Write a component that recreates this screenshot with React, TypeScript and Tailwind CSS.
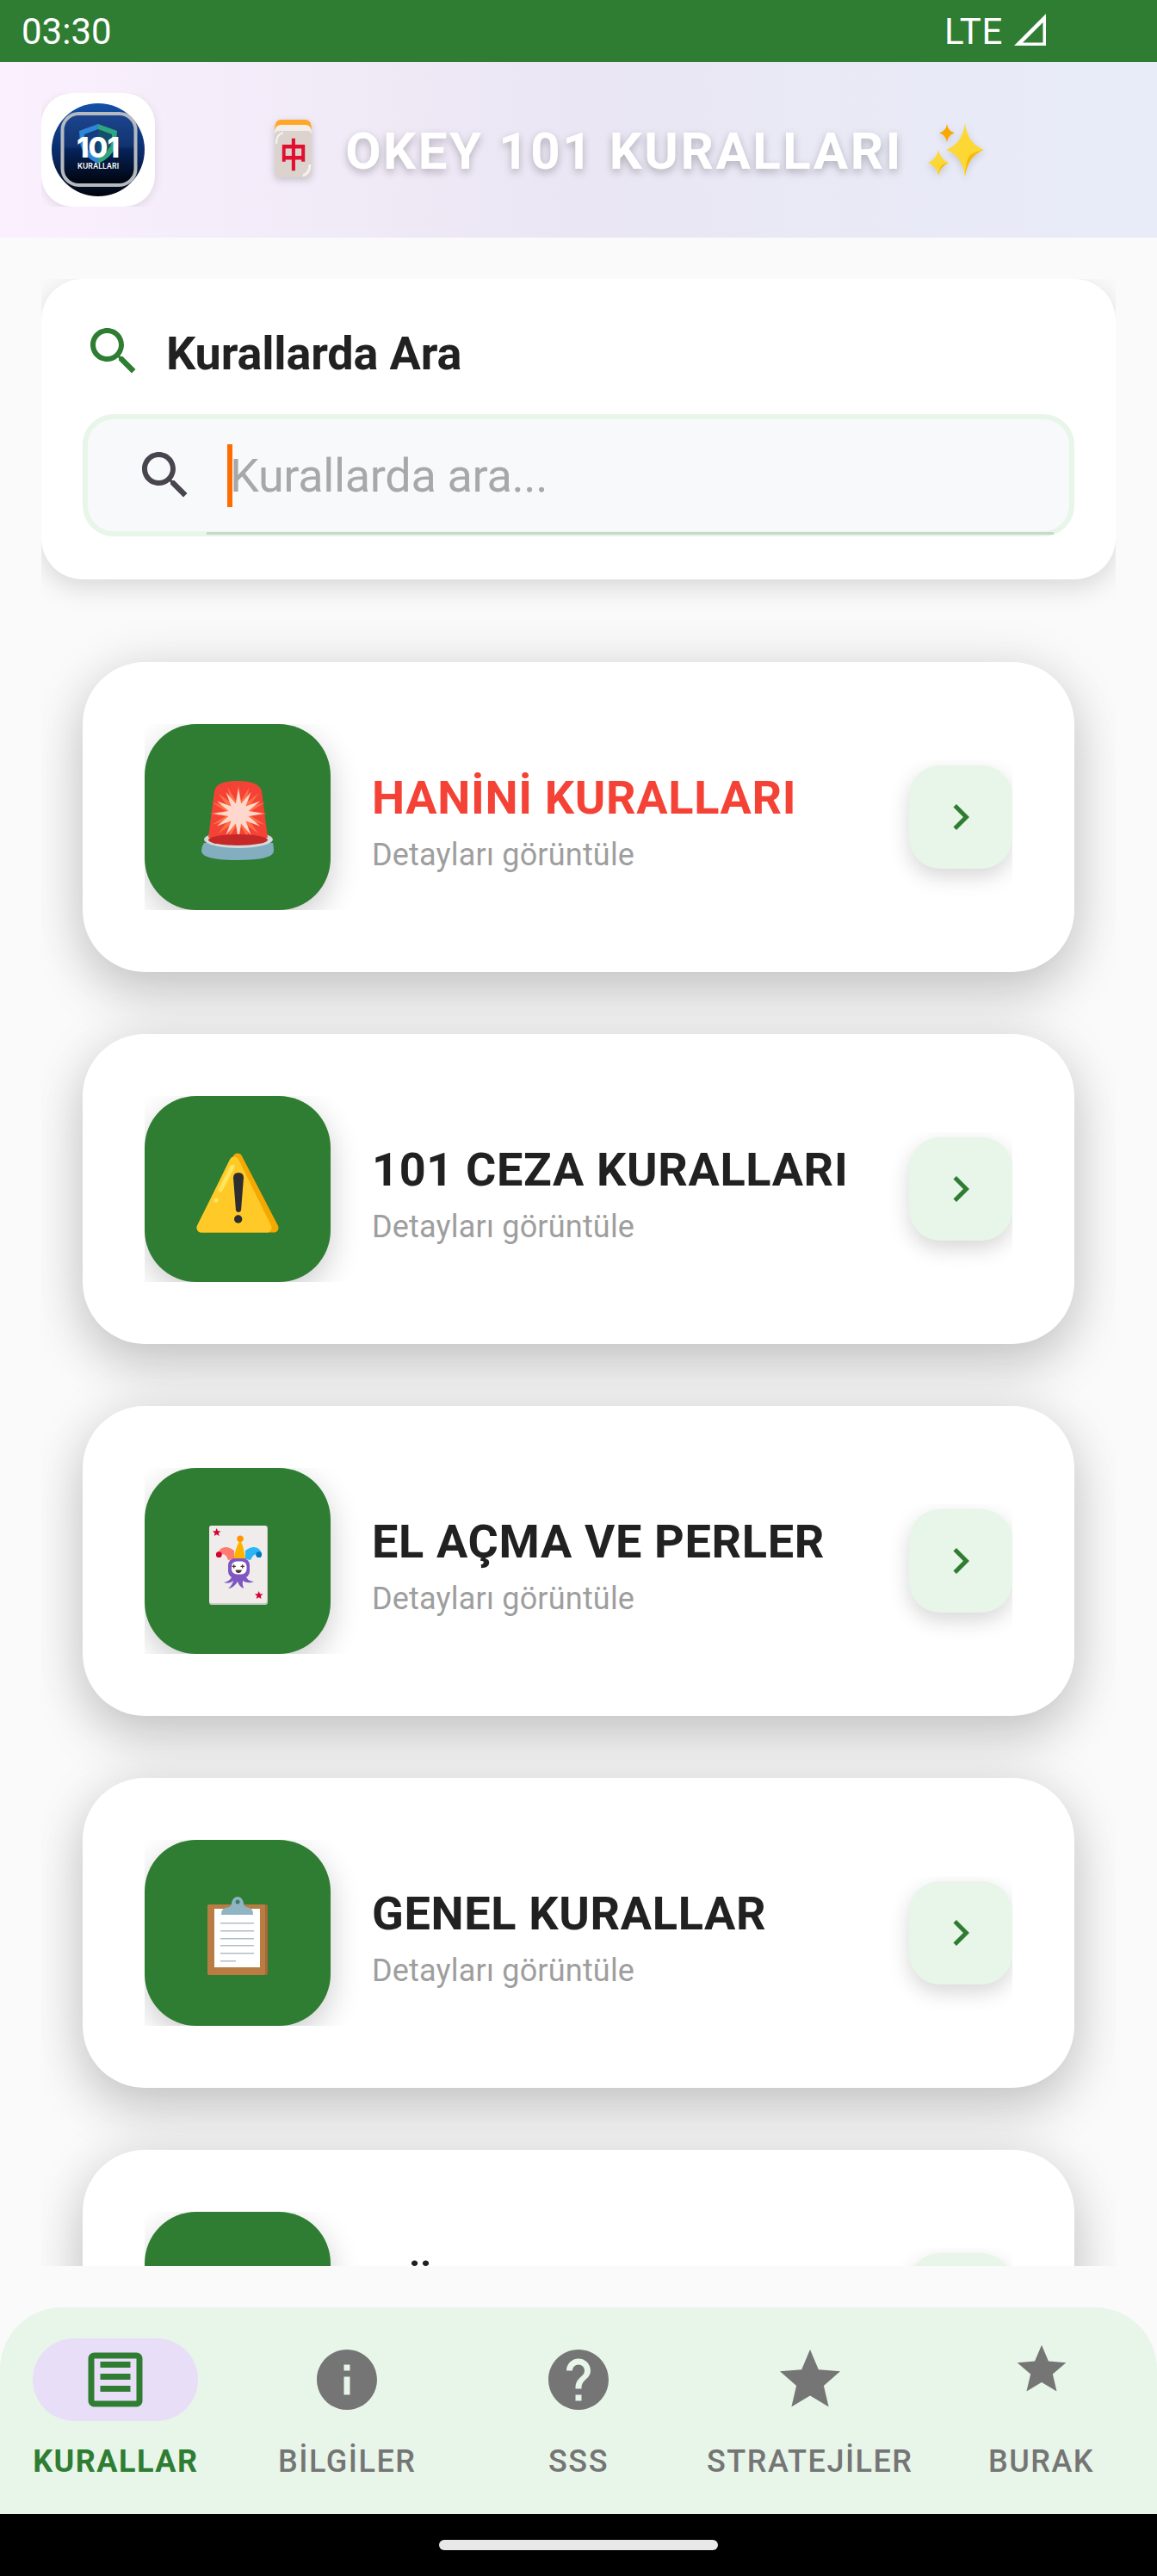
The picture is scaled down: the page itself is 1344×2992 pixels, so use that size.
import type { ReactNode } from "react";

const GREEN = "#2E7D32";

function starPoints(cx: number, cy: number, outer: number, inner: number, n: number) {
  const pts: string[] = [];
  for (let i = 0; i < n * 2; i++) {
    const r = i % 2 === 0 ? outer : inner;
    const a = (Math.PI * i) / n - Math.PI / 2;
    pts.push(`${cx + r * Math.cos(a)},${cy + r * Math.sin(a)}`);
  }
  return pts.join(" ");
}

function Mat({ d, size, color, className }: { d: string; size: number; color: string; className?: string }) {
  return (
    <svg width={size} height={size} viewBox="0 0 24 24" fill={color} className={className}>
      <path d={d} />
    </svg>
  );
}

const SEARCH =
  "M15.5 14h-.79l-.28-.27C15.41 12.59 16 11.11 16 9.5 16 5.91 13.09 3 9.5 3S3 5.91 3 9.5 5.91 16 9.5 16c1.61 0 3.09-.59 4.23-1.57l.27.28v.79l5 4.99L20.49 19l-4.99-5zm-6 0C7.01 14 5 11.99 5 9.5S7.01 5 9.5 5 14 7.01 14 9.5 11.99 14 9.5 14z";
const CHEVRON = "M10 6L8.59 7.41 13.17 12l-4.58 4.59L10 18l6-6z";
const DOC =
  "M19 5v14H5V5h14m0-2H5c-1.1 0-2 .9-2 2v14c0 1.1.9 2 2 2h14c1.1 0 2-.9 2-2V5c0-1.1-.9-2-2-2zM7 6h10v2H7zM7 10h10v2H7zM7 14h10v2H7z";
const INFO =
  "M12 2C6.48 2 2 6.48 2 12s4.48 10 10 10 10-4.48 10-10S17.52 2 12 2zm1 15h-2v-6h2v6zm0-8h-2V7h2v2z";
const HELP =
  "M12 2C6.48 2 2 6.48 2 12s4.48 10 10 10 10-4.48 10-10S17.52 2 12 2zm1 17h-2v-2h2v2zm2.07-7.75l-.9.92C13.45 12.9 13 13.5 13 15h-2v-.5c0-1.1.45-2.1 1.17-2.83l1.24-1.26c.37-.36.59-.86.59-1.41 0-1.1-.9-2-2-2s-2 .9-2 2H8c0-2.21 1.79-4 4-4s4 1.79 4 4c0 .88-.36 1.68-.93 2.25z";
const STAR = "M12 17.27L18.18 21l-1.64-7.03L22 9.24l-7.19-.61L12 2 9.19 8.63 2 9.24l5.46 4.73L5.82 21z";

function EmojiBox({ children }: { children: ReactNode }) {
  return (
    <svg width="96" height="108" viewBox="0 0 96 108">
      {children}
    </svg>
  );
}

function Siren() {
  return (
    <EmojiBox>
      <path d="M6 93 Q6 88 9 84 L89 84 Q90 88 90 93 Q90 104 48 104 Q6 104 6 93z" fill="#82AEC0" />
      <ellipse cx="49" cy="80" rx="40" ry="10" fill="#D5DADC" />
      <path d="M14 78 L21 24 Q23 12 48 12 Q73 12 76 24 L83 78z" fill="#F44336" />
      <polygon points={starPoints(49, 50, 33, 15, 16)} fill="#FF7043" />
      <polygon points={starPoints(49, 50, 29, 12, 12)} fill="#FFD7CC" />
      <ellipse cx="48.5" cy="80.5" rx="34.5" ry="6.5" fill="#C62828" />
    </EmojiBox>
  );
}

function Warning() {
  return (
    <EmojiBox>
      <path d="M48 18 L90 99 L6 99z" fill="#F5A900" stroke="#F5A900" strokeWidth="11" strokeLinejoin="round" />
      <path d="M44 22 L82 99 L6 99z" fill="#FFCA28" stroke="#FFCA28" strokeWidth="11" strokeLinejoin="round" />
      <path d="M42 28 L28 55" stroke="#FFE45E" strokeWidth="5" strokeLinecap="round" fill="none" />
      <circle cx="23" cy="67" r="2.6" fill="#FFE45E" />
      <path d="M43 41 Q43 35 49 35 Q55 35 55 41 L52 79 Q51 81 49 81 Q47 81 46 79z" fill="#2E2E30" />
      <circle cx="48.7" cy="89" r="4.7" fill="#2E2E30" />
    </EmojiBox>
  );
}

function Joker() {
  return (
    <EmojiBox>
      <rect x="15" y="13" width="68" height="92" rx="3" fill="#CFC8C4" />
      <rect x="15" y="13" width="67" height="90" rx="3" fill="#F0ECEC" />
      <polygon points={starPoints(23.7, 21, 5, 2.2, 5)} fill="#D50032" />
      <polygon points={starPoints(72.7, 94, 5, 2.2, 5)} fill="#D50032" />
      <path d="M44 52 L44 42 Q36 36 30 39 Q26 41 25 46 L29 47 Q34 44 37 53z" fill="#FF7B6E" />
      <path d="M57 52 L57 42 Q65 36 71 39 Q75 41 76 46 L72 47 Q67 44 63 53z" fill="#29B6F6" />
      <circle cx="26.3" cy="46.7" r="3.4" fill="#D50032" />
      <circle cx="72.7" cy="46.7" r="3.4" fill="#0277BD" />
      <path d="M43.5 52 Q45 40 51 29 Q56 40 57 52z" fill="#FFB300" />
      <circle cx="51" cy="28.3" r="3.8" fill="#FF9800" />
      <path d="M42 70 Q40 78 32 79 Q39 81 43 77 Q42 82 37 86 Q44 85 48 78 Q50 84 55 86 Q53 81 54 77 Q60 81 67 78 Q58 77 57 70z" fill="#7E57C2" />
      <rect x="37" y="51" width="25" height="23" rx="8" fill="#7E57C2" />
      <rect x="41" y="54.5" width="17.5" height="15" rx="6" fill="#FFFFFF" />
      <path d="M41.5 60.3h4.4M43.7 58.2v4.2M51.5 60.3h4.4M53.7 58.2v4.2" stroke="#4E342E" strokeWidth="1.3" />
      <path d="M45.5 64.5 H53 Q52 68 49 68 Q46 68 45.5 64.5z" fill="#4E342E" />
    </EmojiBox>
  );
}

function Clipboard() {
  const lines = [42, 51, 60, 68, 77];
  return (
    <EmojiBox>
      <rect x="13" y="21" width="70" height="82" rx="2" fill="#A5683A" />
      <rect x="13" y="21" width="67" height="82" rx="2" fill="#B97D43" />
      <rect x="21" y="26" width="53" height="68" fill="#FFFFFF" />
      {lines.map((y) => (
        <rect key={y} x="28" y={y} width="39" height="1.5" fill="#B0BEC5" />
      ))}
      <rect x="28" y="86" width="18" height="1.5" fill="#B0BEC5" />
      <path d="M29 33 Q28 25 38 24 Q41 23 41 19 Q43 12 48 12 Q53 12 55 19 Q55 23 58 24 Q67 25 66 33z" fill="#90B4C4" />
      <circle cx="48" cy="18" r="2.5" fill="#3E7D6A" />
    </EmojiBox>
  );
}

function Logo() {
  return (
    <svg width="132" height="132" viewBox="0 0 132 132">
      <defs>
        <linearGradient id="logoBg" x1="0" y1="0" x2="0" y2="1">
          <stop offset="0" stopColor="#1450A8" />
          <stop offset="0.55" stopColor="#0A2A66" />
          <stop offset="1" stopColor="#02040C" />
        </linearGradient>
        <linearGradient id="logoIn" x1="0" y1="0" x2="0" y2="1">
          <stop offset="0" stopColor="#1D4690" />
          <stop offset="0.45" stopColor="#11336F" />
          <stop offset="0.5" stopColor="#06235A" />
          <stop offset="1" stopColor="#00030A" />
        </linearGradient>
      </defs>
      <circle cx="66" cy="66" r="54" fill="url(#logoBg)" />
      <rect x="24.5" y="24" width="85" height="83" rx="19" fill="url(#logoIn)" stroke="#B5BAC0" strokeWidth="4" />
      <path d="M44 44 L66 36 L66 82 Q48 74 45 58z" fill="#2F86D8" />
      <path d="M88 44 L66 36 L66 82 Q84 74 87 58z" fill="#2FA67F" />
      <path d="M50 48 L66 42 L66 74 Q52 68 50 56z" fill="#123E80" />
      <path d="M82 48 L66 42 L66 74 Q80 68 82 56z" fill="#11506B" />
      <text x="65.5" y="75" textAnchor="middle" fill="#FFFFFF" fontFamily="Inter, Roboto, sans-serif" fontWeight="800" fontSize="33" letterSpacing="-1">
        101
      </text>
      <text x="66" y="88" textAnchor="middle" fill="#FFFFFF" fontFamily="Inter, Roboto, sans-serif" fontWeight="600" fontSize="8.6">
        KURALLARI
      </text>
    </svg>
  );
}

function Tile() {
  return (
    <svg width="46" height="71" viewBox="0 0 46 71" className="shrink-0 [filter:drop-shadow(0_3px_4px_rgba(0,0,0,0.18))]">
      <path d="M1 12 Q1 0 8 0 H37 Q44 0 44 12z" fill="#FFA726" />
      <path d="M1 16 Q1 6 8 6 H37 Q44 6 44 16z" fill="#F3EEEA" />
      <rect x="1" y="13" width="43" height="54" rx="5" fill="#DCD3CE" />
      <path d="M3 28 Q3 17 11 15" stroke="#F5F2F0" strokeWidth="2" fill="none" />
      <path d="M42 52 Q42 62 34 65" stroke="#F5F2F0" strokeWidth="3" fill="none" />
      <g transform="translate(23 55) scale(0.82 1)">
        <text x="0" y="0" textAnchor="middle" fill="#E0102F" fontFamily="'Noto Sans CJK TC', sans-serif" fontWeight="700" fontSize="39">
          中
        </text>
      </g>
    </svg>
  );
}

function Sparkles() {
  return (
    <svg width="68" height="62" viewBox="0 0 68 62" className="shrink-0 [filter:drop-shadow(0_3px_4px_rgba(0,0,0,0.15))]">
      <path d="M44 0 Q47 24 66 31 Q47 38 44 62 Q41 38 22 31 Q41 24 44 0z" fill="#FDD835" />
      <path d="M66 31 Q47 38 44 62 Q45 42 50 37 Q56 33 66 31z" fill="#F9B800" />
      <path d="M23 1 Q24 9 32 11.5 Q24 14 23 22 Q22 14 14 11.5 Q22 9 23 1z" fill="#F9A800" />
      <path d="M13 31 Q15 42 25 46 Q15 50 13 61 Q11 50 1 46 Q11 42 13 31z" fill="#FDD835" />
      <path d="M25 46 Q15 50 13 61 Q14 52 17 49 Q20 47 25 46z" fill="#F9B800" />
    </svg>
  );
}

const RULES = [
  { title: "HANİNİ KURALLARI", red: true, icon: <Siren /> },
  { title: "101 CEZA KURALLARI", red: false, icon: <Warning /> },
  { title: "EL AÇMA VE PERLER", red: false, icon: <Joker /> },
  { title: "GENEL KURALLAR", red: false, icon: <Clipboard /> },
  { title: "GÖSTERGE KURALLARI", red: false, icon: <Warning /> },
];

function RuleCard({ title, red, icon }: { title: string; red: boolean; icon: ReactNode }) {
  return (
    <div className="flex h-[360px] shrink-0 items-center rounded-[72px] bg-white pl-[72px] pr-[72px] shadow-[0_30px_60px_rgba(0,0,0,0.16),0_0_60px_rgba(0,0,0,0.1)]">
      <div className="flex h-[216px] w-[216px] shrink-0 items-center justify-center rounded-[60px] bg-[#2E7D32] shadow-[0_12px_36px_rgba(0,0,0,0.2)] [clip-path:inset(0_-36px_0_0)]">
        {icon}
      </div>
      <div className="ml-[48px] flex min-w-0 flex-1 flex-col pt-[13px]">
        <p
          className={`text-[54px] leading-[72px] font-bold tracking-[0.67px] whitespace-nowrap ${red ? "text-[#F44336]" : "text-[#212121]"}`}
        >
          {title}
        </p>
        <p className="mt-[3px] text-[36px] leading-[54px] tracking-[0.2px] text-[#9E9E9E]">Detayları görüntüle</p>
      </div>
      <div className="flex h-[120px] w-[120px] shrink-0 items-center justify-center rounded-[36px] bg-[#E8F5E9] shadow-[0_9px_24px_rgba(0,0,0,0.16)] [clip-path:inset(-6px_0_-36px_-24px)]">
        <Mat d={CHEVRON} size={60} color={GREEN} />
      </div>
    </div>
  );
}

const TABS = [
  { label: "KURALLAR", d: DOC, active: true },
  { label: "BİLGİLER", d: INFO, active: false },
  { label: "SSS", d: HELP, active: false },
  { label: "STRATEJİLER", d: STAR, active: false },
  { label: "BURAK", d: STAR, active: false, small: true },
];

export default function App() {
  return (
    <div className="flex h-[2992px] w-[1344px] flex-col overflow-hidden bg-[#FAFAFA] font-['Roboto',sans-serif]">
      {/* status bar */}
      <div className="flex h-[72px] shrink-0 items-center bg-[#2E7D32] pl-[25px] pr-[128px] text-[42px] text-white">
        <span>03:30</span>
        <span className="ml-auto tracking-[0.7px]">LTE</span>
        <svg width="38" height="38" viewBox="0 0 38 38" className="ml-[13px] mb-[2px]">
          <path d="M37 0 V37 H0z M33.5 10 L10 33.5 H33.5z" fill="#FFFFFF" fillRule="evenodd" />
        </svg>
      </div>

      {/* header */}
      <div className="flex h-[204px] shrink-0 items-center bg-linear-to-r from-[#FBF0FE] via-[#EAE6F3] to-[#E8ECF9] pl-[48px] pr-[48px]">
        <div className="h-[132px] w-[132px] shrink-0 rounded-[36px] bg-white shadow-[0_3px_12px_rgba(0,0,0,0.1)] [clip-path:inset(0_-12px_0_0)]">
          <Logo />
        </div>
        <div className="flex flex-1 items-center justify-center pr-[13px]">
          <Tile />
          <span className="ml-[37px] pt-[4px] text-[60px] leading-none font-bold tracking-[2.55px] whitespace-nowrap text-white [text-shadow:0_4px_10px_rgba(0,0,0,0.25)]">
            OKEY 101 KURALLARI
          </span>
          <div className="ml-[28px]">
            <Sparkles />
          </div>
        </div>
      </div>

      {/* search */}
      <div className="mx-[48px] mt-[48px] shrink-0 rounded-[48px] bg-white pb-[50px] pl-[48px] pr-[48px] pt-[48px] shadow-[0_9px_30px_rgba(0,0,0,0.14)] [clip-path:inset(0_0_-48px_0)]">
        <div className="flex h-[72px] items-center">
          <Mat d={SEARCH} size={72} color={GREEN} />
          <h2 className="ml-[25px] pt-[5px] text-[54px] font-bold tracking-[-0.15px] text-[#212121]">Kurallarda Ara</h2>
        </div>
        <div className="relative mt-[37px] flex h-[142px] items-center rounded-[36px] border-[6px] border-[#E8F5E9] bg-[#F8F9FB] pl-[54px]">
          <Mat d={SEARCH} size={72} color="#49454F" />
          <div className="ml-[36px] h-[73px] w-[6px] bg-[#FF6D00]" />
          <span className="-ml-[3px] text-[54px] tracking-[-0.35px] text-[#A8A8A8]">Kurallarda ara...</span>
          <div className="absolute right-[18px] bottom-[-4px] left-[138px] h-[3px] bg-[#C8D8CA]" />
        </div>
      </div>

      {/* list */}
      <div className="mx-[48px] mt-[48px] flex min-h-0 flex-1 flex-col gap-[72px] overflow-hidden pl-[48px] pr-[48px] pt-[48px]">
        {RULES.map((r) => (
          <RuleCard key={r.title} title={r.title} red={r.red} icon={r.icon} />
        ))}
      </div>

      {/* bottom nav */}
      <div className="mt-[48px] flex h-[240px] shrink-0 rounded-t-[72px] bg-[#E8F5E9]">
        {TABS.map((t) => (
          <div key={t.label} className="flex flex-1 flex-col items-center pt-[36px]">
            <div
              className={`flex h-[96px] w-[192px] justify-center rounded-[48px] ${t.small ? "pt-[2px]" : "pt-[6px]"} ${t.active ? "bg-[#E8DEF8]" : ""}`}
            >
              <Mat d={t.d} size={t.small ? 68 : 84} color={t.active ? GREEN : "#757575"} />
            </div>
            <span
              className={`mt-[23px] text-[36px] leading-[48px] tracking-[1.5px] whitespace-nowrap ${t.active ? "font-bold text-[#2E7D32]" : "font-medium text-[#757575]"}`}
            >
              {t.label}
            </span>
          </div>
        ))}
      </div>

      {/* gesture bar */}
      <div className="flex h-[72px] shrink-0 items-center justify-center bg-black">
        <div className="h-[12px] w-[324px] rounded-full bg-[#E8E8E8]" />
      </div>
    </div>
  );
}
